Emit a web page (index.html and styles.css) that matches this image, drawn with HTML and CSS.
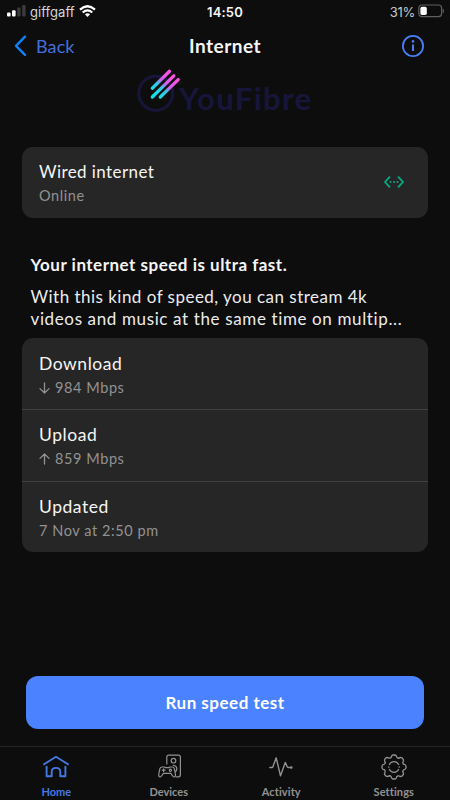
FILE: index.html
```html
<!DOCTYPE html>
<html lang="en">
<head>
<meta charset="utf-8">
<title>Internet</title>
<link rel="stylesheet" href="styles.css">
</head>
<body>
<div class="app">
  <div class="status">
    <div class="carrier">
      <svg width="20" height="14" viewBox="0 0 20 14"><rect x="0" y="8.5" width="3.6" height="4" rx="1" fill="#fff"/><rect x="5" y="6.2" width="3.6" height="6.3" rx="1" fill="#fff"/><rect x="10.2" y="3.5" width="3.4" height="9" rx="1" fill="#3b3b3b"/><rect x="15.2" y="1" width="3.4" height="11.5" rx="1" fill="#3b3b3b"/></svg>
      <span class="carrier-name">giffgaff</span>
      <svg width="17" height="13" viewBox="0 0 17 13" fill="none" stroke="#fff" stroke-width="2.2"><path d="M1 4.6Q8.5-2.1 16 4.6M3.7 7.5Q8.5 3.3 13.3 7.5"/><path d="M5.9 9.3Q8.5 7.2 11.1 9.3L8.5 12z" fill="#fff" stroke="none"/></svg>
    </div>
    <span class="clock">14:50</span>
    <div class="power"><span class="percent">31%</span>
      <svg width="27" height="14" viewBox="0 0 27 14"><rect x=".8" y="1" width="22.8" height="11.6" rx="3" fill="none" stroke="#606060" stroke-width="1.2"/><rect x="2.4" y="2.7" width="6.4" height="8.2" rx="1.7" fill="#fff"/><path d="M25 5q1.5 1.7 0 4z" fill="#606060" stroke="#606060" stroke-width=".5"/></svg>
    </div>
  </div>
  <header class="nav">
    <div class="back"><svg width="13" height="22" viewBox="0 0 13 22"><path d="M11 1.7 2 10.8l9 9.1" fill="none" stroke="#0b82fa" stroke-width="2.4" stroke-linecap="round" stroke-linejoin="round"/></svg><span class="back-label">Back</span></div>
    <h1 class="title">Internet</h1>
    <svg class="info" width="24" height="24" viewBox="0 0 24 24"><circle cx="12" cy="12" r="10.1" fill="none" stroke="#4780f5" stroke-width="1.8"/><path d="M12 10.4v6.5" stroke="#4780f5" stroke-width="2"/><circle cx="12" cy="7.4" r="1.3" fill="#4780f5"/></svg>
  </header>
  <svg class="logo" width="190" height="56" viewBox="0 0 190 56">
    <defs><linearGradient id="beam" gradientUnits="userSpaceOnUse" x1="20" y1="29" x2="37" y2="12"><stop offset="0" stop-color="#12dfe8"/><stop offset=".38" stop-color="#35c6e8"/><stop offset=".62" stop-color="#d45bea"/><stop offset="1" stop-color="#ff50e6"/></linearGradient></defs>
    <circle cx="20.8" cy="28.3" r="17" fill="none" stroke="#17163a" stroke-width="3"/>
    <path d="M17.3 23.2 34.5 6.3M17.3 32 38.8 10.8M25.3 32 43.2 14.6" fill="none" stroke="url(#beam)" stroke-width="3.3" stroke-linecap="round"/>
    <text class="wordmark" x="44" y="45" textLength="132" lengthAdjust="spacing">YouFibre</text>
  </svg>
  <section class="card connection">
    <div><div class="name">Wired internet</div><div class="detail online">Online</div></div>
    <svg width="20" height="12" viewBox="0 0 20 12" fill="none" stroke="#06ad80" stroke-width="1.8" stroke-linecap="round" stroke-linejoin="round"><path d="M5.5 1.2 1 6l4.5 4.8M14.5 1.2 19 6l-4.5 4.8"/><path d="M6.5 6h.1M10 6h.1M13.5 6h.1"/></svg>
  </section>
  <section class="summary">
    <h2 class="headline">Your internet speed is ultra fast.</h2>
    <p class="copy"><span class="line first">With this kind of speed, you can stream 4k</span><span class="line second">videos and music at the same time on multip...</span></p>
  </section>
  <section class="card results">
    <div class="result"><div class="name download">Download</div><div class="detail"><svg class="arrow" width="11" height="12" viewBox="0 0 11 12"><path d="M5.5 1v10M1 6.6 5.5 11 10 6.6"/></svg><span class="rate">984 Mbps</span></div></div>
    <div class="result"><div class="name upload">Upload</div><div class="detail"><svg class="arrow" width="11" height="12" viewBox="0 0 11 12"><path d="M5.5 11V1M1 5.4 5.5 1 10 5.4"/></svg><span class="rate">859 Mbps</span></div></div>
    <div class="result"><div class="name updated">Updated</div><div class="detail date">7 Nov at 2:50 pm</div></div>
  </section>
  <button class="run"><span>Run speed test</span></button>
  <nav class="tabs">
    <div class="tab active">
      <svg width="28" height="28" viewBox="0 0 28 28" stroke-width="1.9"><path d="m2 10.2 12-7.4 12 7.4M4.6 12.6v9.7h5.1v-4.6q0-3.8 4.3-3.8t4.3 3.8v4.6h5.1v-9.7"/></svg><span class="tab-label home">Home</span>
    </div>
    <div class="tab">
      <svg width="28" height="28" viewBox="0 0 28 28" stroke-width="1.2"><path d="M11.8 10V3.2q0-2 2-2h9.6q2 0 2 2v17.6q0 2-2 2h-2.2"/><circle cx="18.5" cy="6.7" r="2.3"/><path d="M18.4 11.4q3.3.3 3.4 3.4 0 1.6-1 2.6M7.2 13h2.4l.7.7h3.6l.7-.7h2.4q1.9 0 2.4 1.8l1 5.2q.4 2.8-1.3 3-1.2 0-3.2-3.7H8.3q-2 3.7-3.2 3.7-1.7-.2-1.3-3l1-5.2Q5.3 13 7.2 13z"/><path d="M7.2 16.2H10M8.6 14.8v2.8"/><circle cx="15.4" cy="16.2" r="1.1"/></svg><span class="tab-label devices">Devices</span>
    </div>
    <div class="tab">
      <svg width="28" height="28" viewBox="0 0 28 28" stroke-width="1.4"><path d="M2.8 13.5h2.1q.7 0 1-.8L9.2 3.8l4.3 18 4.8-13.4 1.9 4.4q.3.7 1.1.7h3"/><circle cx="24.4" cy="13.5" r=".5"/></svg><span class="tab-label activity">Activity</span>
    </div>
    <div class="tab">
      <svg width="28" height="28" viewBox="-14 -13 28 28" stroke-width="1.3"><defs><path id="tooth" d="M-2.9-9.6Q-2.3-11.8-1-12H1Q2.3-11.8 2.9-9.6 3.8-8.4 4.74-8.84"/></defs><use href="#tooth"/><use href="#tooth" transform="rotate(45)"/><use href="#tooth" transform="rotate(90)"/><use href="#tooth" transform="rotate(135)"/><use href="#tooth" transform="rotate(180)"/><use href="#tooth" transform="rotate(225)"/><use href="#tooth" transform="rotate(270)"/><use href="#tooth" transform="rotate(315)"/><path d="M-4.6-2.5a5.2 5.2 0 0 1 9.2 0M-4.6 2.5a5.2 5.2 0 0 0 9.2 0M-5.2-.2v.4M5.2-.2v.4"/></svg><span class="tab-label settings">Settings</span>
    </div>
  </nav>
</div>
</body>
</html>
```
FILE: styles.css
```css
* { box-sizing: border-box; }
body { margin: 0; background: #0d0d0d; color: #f5f5f5; font-family: Lato, "Liberation Sans", sans-serif; font-variant-ligatures: none; }
svg { display: block; flex: none; }
.app { width: 450px; height: 800px; display: flex; flex-direction: column; overflow: hidden; white-space: nowrap; }
.status { height: 23px; padding: 0 5px 0 7px; display: grid; grid-template-columns: 1fr auto 1fr; align-items: center; font-family: Inter, sans-serif; font-size: 13px; }
.carrier { display: flex; align-items: center; gap: 3px; }
.carrier > svg { margin-bottom: 1px; }
.carrier-name { color: #d6d6d6; letter-spacing: .05px; margin-right: 1px; }
.clock { font-weight: 600; letter-spacing: .2px; transform: translateX(-1px); }
.power { display: flex; justify-content: flex-end; align-items: center; gap: 3px; color: #c8c8c8; }
.power > svg { margin-bottom: 1px; }
.percent { letter-spacing: -.25px; }
.nav { height: 45px; padding: 0 25px 0 14px; display: grid; grid-template-columns: 1fr auto 1fr; align-items: center; }
.back { display: flex; align-items: center; gap: 9px; color: #426fd9; font-size: 18px; letter-spacing: .1px; }
.title { margin: 0 0 0 -11px; font-size: 19px; line-height: 24px; font-weight: 700; letter-spacing: .5px; transform: translateX(11px); }
.info { justify-self: end; }
.logo { margin: -3px 0 0 135px; overflow: visible; }
.wordmark { font-size: 31px; font-weight: 700; fill: #17163a; }
.card { margin: 0 22px; background: #262626; border-radius: 11px; }
.connection { height: 71px; margin-top: 26px; padding: 12px 24px 0 17px; display: flex; justify-content: space-between; }
.connection > svg { margin-top: 17px; }
.name { font-size: 17px; line-height: 25px; letter-spacing: .42px; }
.detail { display: flex; align-items: center; gap: 5px; color: #929292; font-size: 14.5px; line-height: 23px; letter-spacing: .58px; }
.download, .upload, .updated { font-size: 17.5px; letter-spacing: .55px; }
.arrow { fill: none; stroke: #929292; stroke-width: 1.3; stroke-linecap: round; stroke-linejoin: round; }
.summary { margin: 35px 0 8px 30.5px; }
.headline { margin: 0; font-size: 17px; line-height: 24px; font-weight: 700; letter-spacing: .5px; }
.copy { margin: 9px 0 0; font-size: 17px; line-height: 22px; color: #ececec; }
.line { display: block; }
.first { letter-spacing: .48px; }
.second { letter-spacing: .63px; }
.results { height: 214px; flex: none; }
.result { height: 71px; padding: 13px 17px 0; }
.result + .result { height: 71.5px; padding-top: 12px; border-top: 1px solid #414141; }
.run { flex: none; width: 398px; height: 53px; margin: 124px 0 0 26px; border: 0; border-radius: 12px; background: #4b82ff; color: #fff; font: 700 17px/24px Lato, sans-serif; letter-spacing: .5px; }
.tabs { height: 54px; margin-top: 17px; border-top: 1px solid #242424; display: grid; grid-template-columns: repeat(4, 1fr); }
.tab { padding-top: 7px; display: flex; flex-direction: column; align-items: center; color: #929292; font-size: 11px; line-height: 16px; font-weight: 700; }
.tab > svg { fill: none; stroke: currentColor; stroke-linecap: round; stroke-linejoin: round; }
.tab-label { margin-top: 2px; }
.activity, .settings { letter-spacing: .1px; }
.active { color: #4678e3; }
```
